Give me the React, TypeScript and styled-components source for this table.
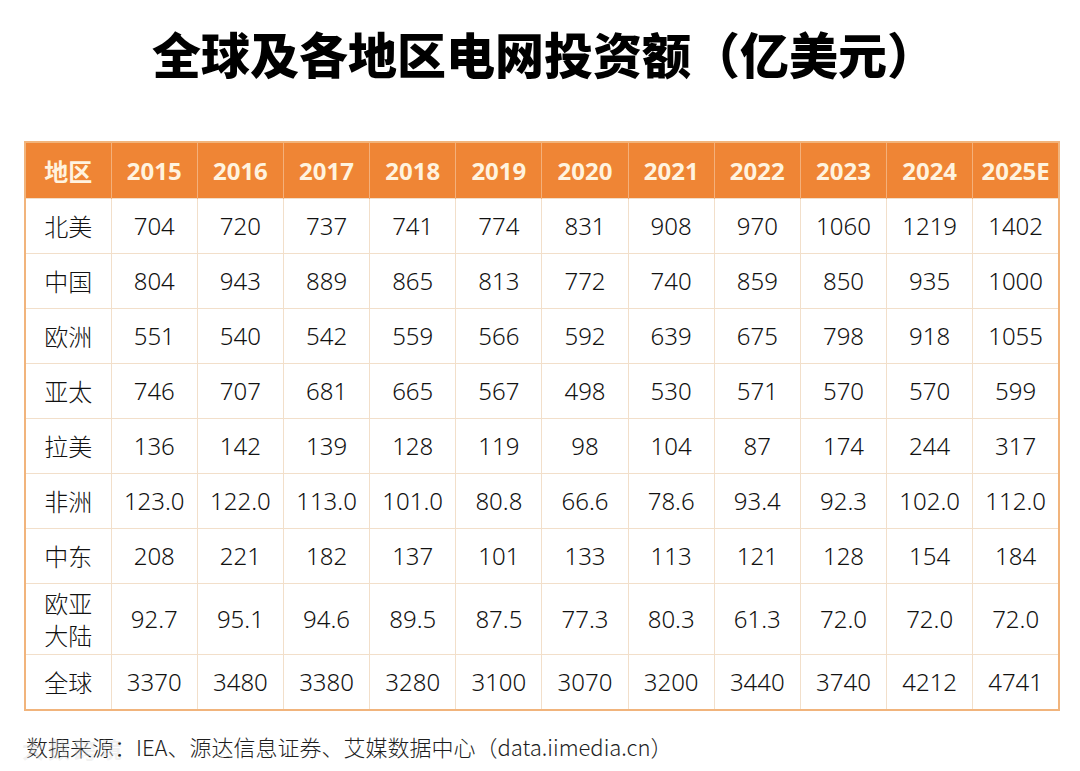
import React from 'react';
import styled, { createGlobalStyle } from 'styled-components';

const GlobalStyle = createGlobalStyle`
  html, body {
    margin: 0;
    padding: 0;
    background: #ffffff;
  }
  body {
    font-family: "Noto Sans", "Noto Sans CJK SC", sans-serif;
  }
`;

const Page = styled.div`
  position: relative;
  width: 1080px;
  height: 771px;
  background: #ffffff;
  overflow: hidden;
`;

const Title = styled.h1`
  margin: 0;
  padding: 25px 0 0 8px;
  height: 141px;
  box-sizing: border-box;
  text-align: center;
  font-family: "Noto Sans CJK SC", sans-serif;
  font-weight: 900;
  font-size: 49px;
  line-height: 56px;
  color: #000000;
`;

const Grid = styled.table`
  margin-left: 24px;
  width: 1036px;
  border-collapse: collapse;
  table-layout: fixed;
  border: 2px solid #f1b47c;
`;

const HeadCell = styled.th`
  height: 55px;
  padding: 0;
  background: #ef8535;
  color: #fff3df;
  font-family: "Noto Sans", "Noto Sans CJK SC", sans-serif;
  font-weight: 700;
  font-size: 24px;
  text-align: center;
  border-left: 1px solid #f4b07a;
  &:first-child {
    border-left: none;
  }
`;

const Row = styled.tr<{ tall?: boolean }>`
  height: ${(p) => (p.tall ? 71 : 55)}px;
`;

const Cell = styled.td<{ label?: boolean }>`
  padding: 0;
  text-align: center;
  font-family: ${(p) => (p.label ? '"Noto Sans CJK SC", sans-serif' : '"Noto Sans", "Noto Sans CJK SC", sans-serif')};
  font-weight: 300;
  font-size: 24px;
  line-height: 32px;
  color: #111111;
  border: 1px solid #f2dfca;
`;

const Source = styled.div`
  margin-top: 19px;
  padding-left: 26px;
  font-family: "Noto Sans CJK SC", sans-serif;
  font-weight: 300;
  font-size: 22px;
  color: #1e1e1e;
`;

const Watermark = styled.div`
  position: absolute;
  left: 22px;
  top: 732px;
  font-family: "Noto Sans CJK SC", sans-serif;
  font-weight: 700;
  font-size: 22px;
  color: rgba(215, 215, 215, 0.35);
  letter-spacing: 4px;
`;

const years = ['2015', '2016', '2017', '2018', '2019', '2020', '2021', '2022', '2023', '2024', '2025E'];

const rows: { name: React.ReactNode; values: string[]; tall?: boolean }[] = [
  { name: '北美', values: ['704', '720', '737', '741', '774', '831', '908', '970', '1060', '1219', '1402'] },
  { name: '中国', values: ['804', '943', '889', '865', '813', '772', '740', '859', '850', '935', '1000'] },
  { name: '欧洲', values: ['551', '540', '542', '559', '566', '592', '639', '675', '798', '918', '1055'] },
  { name: '亚太', values: ['746', '707', '681', '665', '567', '498', '530', '571', '570', '570', '599'] },
  { name: '拉美', values: ['136', '142', '139', '128', '119', '98', '104', '87', '174', '244', '317'] },
  { name: '非洲', values: ['123.0', '122.0', '113.0', '101.0', '80.8', '66.6', '78.6', '93.4', '92.3', '102.0', '112.0'] },
  { name: '中东', values: ['208', '221', '182', '137', '101', '133', '113', '121', '128', '154', '184'] },
  {
    name: (
      <>
        欧亚
        <br />
        大陆
      </>
    ),
    values: ['92.7', '95.1', '94.6', '89.5', '87.5', '77.3', '80.3', '61.3', '72.0', '72.0', '72.0'],
    tall: true,
  },
  { name: '全球', values: ['3370', '3480', '3380', '3280', '3100', '3070', '3200', '3440', '3740', '4212', '4741'] },
];

export default function App() {
  return (
    <Page>
      <GlobalStyle />
      <Title>全球及各地区电网投资额（亿美元）</Title>
      <Grid>
        <thead>
          <tr>
            <HeadCell>地区</HeadCell>
            {years.map((y) => (
              <HeadCell key={y}>{y}</HeadCell>
            ))}
          </tr>
        </thead>
        <tbody>
          {rows.map((r, i) => (
            <Row key={i} tall={r.tall}>
              <Cell label>{r.name}</Cell>
              {r.values.map((v, j) => (
                <Cell key={j}>{v}</Cell>
              ))}
            </Row>
          ))}
        </tbody>
      </Grid>
      <Source>数据来源：IEA、源达信息证券、艾媒数据中心（data.iimedia.cn）</Source>
      <Watermark>大数跨境</Watermark>
    </Page>
  );
}
